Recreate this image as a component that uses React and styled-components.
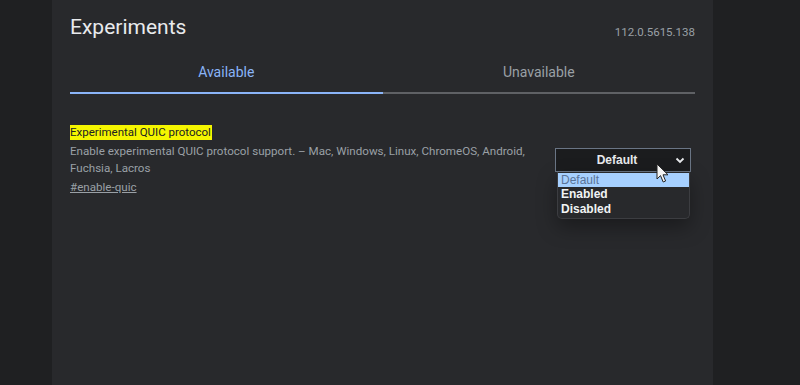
import React from "react";
import styled, { createGlobalStyle } from "styled-components";

const GlobalStyle = createGlobalStyle`
  html, body {
    margin: 0;
    padding: 0;
    background: #1f2022;
    font-family: Roboto, "Liberation Sans", Arial, sans-serif;
  }
`;

const Page = styled.div`
  height: 385px;
  padding-left: 52px;
  display: flex;
  overflow: hidden;
`;

const Panel = styled.div`
  width: 661px;
  height: 385px;
  box-sizing: border-box;
  background: #28292c;
  padding: 12px 18px 0;
  display: flex;
  flex-direction: column;
`;

const Header = styled.div`
  display: flex;
  justify-content: space-between;
  align-items: flex-end;
  height: 28px;
`;

const Title = styled.h1`
  margin: 0;
  font-size: 21px;
  font-weight: 400;
  color: #e8eaed;
  line-height: 26px;
`;

const Version = styled.span`
  font-size: 11.5px;
  color: #9aa0a6;
  margin-bottom: 1px;
`;

const Tabs = styled.div`
  display: flex;
  margin-top: 20px;
  border-bottom: 2px solid #5f6165;
`;

const Tab = styled.div`
  flex: 1;
  text-align: center;
  font-size: 14px;
  height: 32px;
  line-height: 24px;
  margin-bottom: -2px;
  color: ${(p) => (p.$active ? "#8ab4f8" : "#9aa0a6")};
  border-bottom: 2px solid ${(p) => (p.$active ? "#8ab4f8" : "transparent")};
`;

const Feature = styled.div`
  display: flex;
  justify-content: space-between;
  margin-top: 31px;
`;

const Info = styled.div`
  width: 480px;
  display: flex;
  flex-direction: column;
  align-items: flex-start;
`;

const FeatureName = styled.mark`
  background: #f5f500;
  color: #202124;
  font-size: 11.5px;
  line-height: 14px;
  padding: 0 1px 1px 0;
`;

const Description = styled.p`
  margin: 3px 0 0;
  font-size: 11.6px;
  line-height: 17px;
  color: #9aa0a6;
`;

const Permalink = styled.a`
  margin-top: 2px;
  font-size: 11.6px;
  line-height: 17px;
  color: #9aa0a6;
  text-decoration: underline;
`;

const SelectWrap = styled.div`
  position: relative;
  width: 136px;
  margin-top: 23px;
  margin-right: 4px;
`;

const SelectBox = styled.div`
  height: 24px;
  box-sizing: border-box;
  border: 1px solid #6a7585;
  background: #1b1c1e;
  display: flex;
  align-items: center;
  justify-content: center;
  position: relative;
  color: #e8eaed;
  font-family: "Liberation Sans", Arial, sans-serif;
  font-size: 12px;
  font-weight: 700;
  padding-right: 12px;
`;

const Chevron = styled.svg`
  position: absolute;
  right: 5px;
  top: 8px;
`;

const Menu = styled.ul`
  position: absolute;
  top: 24px;
  left: 2px;
  right: 1px;
  margin: 0;
  padding: 1px 0 2px;
  list-style: none;
  background: #28292c;
  border: 1px solid #3c3d41;
  border-top: none;
  border-radius: 0 0 5px 5px;
  box-shadow: 0 8px 20px rgba(0, 0, 0, 0.35);
`;

const Option = styled.li`
  font-family: "Liberation Sans", Arial, sans-serif;
  font-size: 12px;
  line-height: 14.3px;
  padding-left: 3px;
  color: ${(p) => (p.$selected ? "#5a7499" : "#f1f3f4")};
  background: ${(p) => (p.$selected ? "#a6d0ff" : "transparent")};
  font-weight: ${(p) => (p.$selected ? 400 : 700)};
`;

const Cursor = styled.svg`
  position: absolute;
  left: 101px;
  top: 15px;
`;

export default function App() {
  return (
    <>
      <GlobalStyle />
      <Page>
        <Panel>
          <Header>
            <Title>Experiments</Title>
            <Version>112.0.5615.138</Version>
          </Header>
          <Tabs>
            <Tab $active>Available</Tab>
            <Tab>Unavailable</Tab>
          </Tabs>
          <Feature>
            <Info>
              <FeatureName>Experimental QUIC protocol</FeatureName>
              <Description>
                Enable experimental QUIC protocol support. – Mac, Windows, Linux, ChromeOS, Android,
                Fuchsia, Lacros
              </Description>
              <Permalink href="#enable-quic">#enable-quic</Permalink>
            </Info>
            <SelectWrap>
              <SelectBox>
                Default
                <Chevron width="10" height="7" viewBox="0 0 10 7">
                  <path d="M1.5 1.5 L5 5 L8.5 1.5" fill="none" stroke="#e8eaed" strokeWidth="1.8" />
                </Chevron>
              </SelectBox>
              <Menu>
                <Option $selected>Default</Option>
                <Option>Enabled</Option>
                <Option>Disabled</Option>
              </Menu>
              <Cursor width="14" height="21" viewBox="0 0 14 21">
                <path
                  d="M1 1 L1 16 L4.5 12.6 L7.2 19 L9.6 18 L7 11.8 L12 11.8 Z"
                  fill="#f4f4f4"
                  stroke="#222"
                  strokeWidth="1"
                  strokeLinejoin="round"
                />
              </Cursor>
            </SelectWrap>
          </Feature>
        </Panel>
      </Page>
    </>
  );
}
